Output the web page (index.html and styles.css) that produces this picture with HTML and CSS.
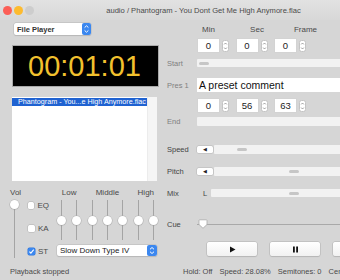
FILE: index.html
```
<!doctype html>
<html lang="en">
  <head>
    <meta charset="utf-8">
    <title>audio / Phantogram - You Dont Get Me High Anymore.flac</title>
    <link rel="stylesheet" href="styles.css">
  </head>
  <body>
    <div class="window">
      <div class="titlebar">
        <div class="lights">
          <span class="light red"></span>
          <span class="light yellow"></span>
          <span class="light gray"></span>
        </div>
        <div class="title">audio / Phantogram - You Dont Get Me High Anymore.flac</div>
      </div>

      <section class="main">
        <!-- left: player, timer, file list, mixer -->
        <div class="left">
          <div class="popup popup_small">
            <span>File Player</span>
            <svg class="popup__stepper" width="9" height="12" viewBox="0 0 9 12"><rect x="0" y="0" width="9" height="12" rx="2" fill="#3b87ef"/><path d="M2.6 4.6 L4.5 2.8 L6.4 4.6 M2.6 7.4 L4.5 9.2 L6.4 7.4" stroke="#fff" stroke-width="1" fill="none"/></svg>
          </div>
          <div class="timer">00:01:01</div>
          <div class="filelist">
            <div class="filelist__items">
              <div class="filelist__row selected">Phantogram - You...e High Anymore.flac</div>
            </div>
            <div class="filelist__gutter"></div>
          </div>

          <div class="mixer">
            <div class="vol">
              <div class="lbl">Vol</div>
              <div class="vslider vslider_vol"><span class="knob"></span></div>
            </div>
            <div class="checks">
              <label class="check"><span class="box"></span>EQ</label>
              <label class="check"><span class="box"></span>KA</label>
              <label class="check"><span class="box checked"><svg width="7" height="7" viewBox="0 0 7 7"><path d="M1.4 3.6 L2.9 5.1 L5.7 1.7" stroke="#fff" stroke-width="1.1" fill="none"/></svg></span>ST</label>
            </div>
            <div class="eq">
              <div class="eq__labels">
                <span class="eq_low">Low</span>
                <span class="eq_mid">Middle</span>
                <span class="eq_high">High</span>
              </div>
              <div class="eq__sliders" id="eq_sliders"></div>
              <div class="popup popup_wide">
                <span>Slow Down Type IV</span>
                <svg class="popup__stepper" width="10" height="11" viewBox="0 0 10 11"><rect x="0" y="0" width="10" height="11" rx="2" fill="#3b87ef"/><path d="M3 4.3 L5 2.5 L7 4.3 M3 6.7 L5 8.5 L7 6.7" stroke="#fff" stroke-width="1" fill="none"/></svg>
              </div>
            </div>
          </div>
          <div class="status status_left">Playback stopped</div>
        </div>

        <!-- right: positions, preset, transport -->
        <div class="right">
          <div class="row row_head">
            <span class="row__label"></span>
            <div class="col_head"><span>Min</span></div>
            <div class="col_head"><span>Sec</span></div>
            <div class="col_head"><span>Frame</span></div>
          </div>
          <div class="row row_nums" data-values="0,0,0"></div>
          <div class="row row_start">
            <span class="row__label dim">Start</span>
            <div class="track"><span class="pill pill_start"></span></div>
          </div>
          <div class="row row_pres">
            <span class="row__label dim">Pres 1</span>
            <div class="field">A preset comment</div>
          </div>
          <div class="row row_nums2" data-values="0,56,63"></div>
          <div class="row row_end">
            <span class="row__label dim">End</span>
            <div class="track"></div>
          </div>
          <div class="row row_speed">
            <span class="row__label">Speed</span>
            <div class="arrowbtn">&#9664;</div>
            <div class="track"><span class="pill" style="left: 23px"></span></div>
          </div>
          <div class="row row_pitch">
            <span class="row__label">Pitch</span>
            <div class="arrowbtn">&#9664;</div>
            <div class="track"><span class="pill" style="left: 75px"></span></div>
          </div>
          <div class="row row_mix">
            <span class="row__label">Mix</span>
            <span class="mix_l">L</span>
            <div class="track"><span class="pill" style="left: 78px"></span></div>
          </div>
          <div class="row row_cue">
            <span class="row__label">Cue</span>
            <div class="cue">
              <svg class="cue__knob" width="10" height="10" viewBox="0 0 10 10"><path d="M1 1.5 Q1 0.8 1.7 0.8 L8.3 0.8 Q9 0.8 9 1.5 L9 5.5 L5 9.3 L1 5.5 Z" fill="#fff" stroke="#a9a9a9" stroke-width="0.8"/></svg>
            </div>
          </div>
          <div class="row row_buttons">
            <button class="btn"><svg width="7" height="7" viewBox="0 0 7 7"><path d="M1 0.5 L6.5 3.5 L1 6.5 Z" fill="#111"/></svg></button>
            <button class="btn"><svg width="7" height="7" viewBox="0 0 7 7"><rect x="1" y="0.5" width="1.8" height="6" fill="#111"/><rect x="4.2" y="0.5" width="1.8" height="6" fill="#111"/></svg></button>
            <button class="btn"></button>
          </div>
          <div class="status status_right">
            <span>Hold: Off</span>
            <span>Speed: 28.08%</span>
            <span>Semitones: 0</span>
            <span>Cents: 0</span>
          </div>
        </div>
      </section>
    </div>

    <script type="text/javascript">
      // spin boxes (number + stepper)
      var stepperSvg = '<svg class="spin__stepper" width="7" height="12" viewBox="0 0 7 12"><rect x="0.5" y="0.5" width="6" height="11" rx="2" fill="#fff" stroke="#c4c4c4"/><path d="M2.2 4.4 L3.5 3 L4.8 4.4 M2.2 7.6 L3.5 9 L4.8 7.6" stroke="#888" stroke-width="0.8" fill="none"/></svg>';
      var numRows = document.querySelectorAll('.row_nums, .row_nums2');
      for (var r of numRows) {
        var values = r.getAttribute('data-values').split(',');
        for (var v of values) {
          var spin = document.createElement('div');
          spin.setAttribute('class', 'spin');
          spin.innerHTML = '<div class="spin__box">' + v + '</div>' + stepperSvg;
          r.appendChild(spin);
        }
      }

      // eq sliders
      var eq = document.getElementById('eq_sliders');
      for (var i = 0; i < 7; i++) {
        var s = document.createElement('div');
        s.setAttribute('class', 'vslider');
        s.innerHTML = '<span class="knob"></span>';
        eq.appendChild(s);
      }
    </script>
  </body>
</html>
```
FILE: styles.css
```
body{
  margin: 0;
  overflow: hidden;
  background: #d6d6d6;
  font-family: "Liberation Sans", Arial, sans-serif;
  font-size: 7.5px;
  color: #3a3a3a;
}
.window{
  width: 404px;
  height: 280px;
  background: #d6d6d6;
}
/*--------------------------*/
.titlebar{
  height: 20px;
  display: flex;
  align-items: center;
  background: linear-gradient(#e2e2e2, #d8d8d8);
}
.lights{
  display: flex;
  gap: 2px;
  padding-left: 3px;
  width: 40px;
}
.light{
  width: 9px;
  height: 9px;
  border-radius: 50%;
}
.red{ background: #fc5f57; }
.yellow{ background: #fdbb2f; }
.gray{ background: #cdcdcd; }
.title{
  flex: 1;
  text-align: center;
  margin-right: 40px;
  color: #4a4a4a;
  font-size: 7.6px;
}
/*--------------------------*/
.main{
  display: flex;
}
.left{
  width: 160px;
  flex: none;
}
.popup{
  display: flex;
  align-items: center;
  justify-content: space-between;
  background: #fff;
  border-radius: 2px;
  box-shadow: 0 0 0 0.5px #b9b9b9, 0 0.5px 1px rgba(0,0,0,0.15);
  color: #222;
}
.popup span{
  padding-left: 3px;
}
.popup_small{
  width: 77px;
  height: 12px;
  margin: 3px 0 0 14px;
  font-size: 7.5px;
  font-weight: bold;
  color: #333;
}
.popup_wide{
  width: 100px;
  height: 11px;
  margin-top: 5px;
  font-size: 8px;
}
.timer{
  margin: 10px 0 0 12px;
  width: 143px;
  height: 40px;
  border: 1px solid #a9a9a9;
  background: #000;
  color: #f2c12e;
  font-size: 29px;
  line-height: 40px;
  text-align: center;
  padding-right: 2px;
  box-sizing: content-box;
}
.filelist{
  display: flex;
  margin: 10px 0 0 12px;
  width: 145px;
  height: 84px;
  background: #fff;
}
.filelist__items{
  flex: 1;
  padding-top: 1px;
}
.filelist__gutter{
  width: 9px;
  background: #f5f5f5;
  border-left: 1px solid #ececec;
}
.filelist__row{
  height: 8px;
  line-height: 8px;
  padding-left: 6px;
  font-size: 7.2px;
}
.selected{
  background: #1f62d1;
  color: #fff;
}
/*--------------------------*/
.mixer{
  display: flex;
  align-items: flex-start;
  margin-top: 7px;
  padding-left: 10px;
}
.lbl,
.eq__labels span{
  height: 10px;
  line-height: 10px;
  font-size: 8px;
  color: #4a4a4a;
}
.vol{
  width: 11px;
  display: flex;
  flex-direction: column;
}
.vslider{
  position: relative;
  width: 9px;
  display: flex;
  justify-content: center;
}
.vslider::before{
  content: "";
  width: 1px;
  background: #a4a4a4;
}
.knob{
  position: absolute;
  left: 0;
  width: 9px;
  height: 9px;
  border-radius: 50%;
  background: #fff;
  box-shadow: 0 0 0 0.5px #b3b3b3, 0 0.5px 1px rgba(0,0,0,0.25);
}
.vslider_vol{
  margin: 2px 0 0 0;
  height: 58px;
}
.vslider_vol .knob{
  top: 0;
}
.checks{
  display: flex;
  flex-direction: column;
  gap: 16px;
  margin: 14px 0 0 7px;
  width: 21px;
}
.check{
  display: flex;
  align-items: center;
  gap: 3px;
  height: 7px;
  font-size: 8px;
  color: #4a4a4a;
}
.box{
  width: 7px;
  height: 7px;
  border-radius: 1.5px;
  background: #fff;
  box-shadow: 0 0 0 0.5px #b0b0b0;
  display: flex;
}
.box.checked{
  background: #3b87ef;
  box-shadow: 0 0 0 0.5px #2f74d8;
}
.eq{
  width: 101px;
  margin-left: 8px;
}
.eq__labels,
.eq__sliders{
  display: grid;
  grid-template-columns: repeat(7, 9px);
  justify-content: space-between;
}
.eq__labels span{
  text-align: center;
}
.eq_low{ grid-column: 1 / 3; }
.eq_mid{ grid-column: 3 / 6; }
.eq_high{ grid-column: 6 / 8; }
.eq__sliders{
  height: 40px;
  margin-top: 2px;
}
.eq__sliders .knob{
  top: 16px;
}
.status{
  font-size: 7.5px;
  color: #4a4a4a;
  height: 10px;
  line-height: 10px;
}
.status_left{
  margin: 9px 0 0 10px;
}
/*--------------------------*/
.right{
  flex: 1;
  padding-left: 7px;
}
.row{
  display: flex;
  align-items: center;
}
.row__label{
  width: 30px;
  flex: none;
  font-size: 7.5px;
  color: #444;
}
.dim{
  color: #808080;
}
.row_head{
  height: 10px;
  margin-top: 4px;
}
.col_head{
  width: 48.5px;
  flex: none;
}
.col_head span{
  display: flex;
  justify-content: center;
  width: 21px;
  margin-left: 1px;
  font-size: 8px;
  color: #4a4a4a;
}
.row_nums,
.row_nums2{
  height: 13px;
  padding-left: 31px;
  gap: 7.5px;
}
.row_nums{ margin-top: 5px; }
.row_nums2{ margin-top: 7px; }
.spin{
  display: flex;
  align-items: center;
  gap: 3px;
}
.spin__box{
  width: 21px;
  height: 13px;
  line-height: 13px;
  background: #fff;
  text-align: center;
  font-size: 9.5px;
  color: #222;
  box-shadow: 0 0 0 0.5px #cfcfcf;
}
.track{
  position: relative;
  flex: 1;
  height: 100%;
  background: #f2f2f2;
  border-radius: 1px;
}
.pill{
  position: absolute;
  top: 50%;
  width: 10px;
  height: 3px;
  margin-top: -1.5px;
  border-radius: 2px;
  background: #c6c6c6;
}
.pill_start{
  left: 2px;
}
.row_start{
  height: 8px;
  margin-top: 7px;
}
.row_pres{
  height: 14px;
  margin-top: 11px;
}
.field{
  flex: 1;
  height: 14px;
  line-height: 14px;
  background: #fff;
  padding-left: 2px;
  font-size: 10.5px;
  color: #111;
}
.row_end{
  height: 9px;
  margin-top: 5px;
}
.row_speed{
  height: 9px;
  margin-top: 19px;
}
.row_pitch{
  height: 9px;
  margin-top: 13px;
}
.arrowbtn{
  width: 16px;
  height: 7px;
  margin-right: 1px;
  background: #fff;
  border-radius: 1.5px;
  box-shadow: 0 0 0 0.5px #b5b5b5;
  font-size: 5px;
  line-height: 7px;
  text-align: center;
  color: #222;
}
.row_mix{
  height: 8px;
  margin-top: 13px;
}
.mix_l{
  width: 14px;
  padding-left: 6px;
  box-sizing: border-box;
  font-size: 7.5px;
  color: #444;
}
.row_cue{
  height: 10px;
  margin-top: 22px;
}
.cue{
  flex: 1;
  height: 10px;
  display: flex;
  align-items: center;
  background: linear-gradient(#a9a9a9, #a9a9a9) no-repeat 0 5px / 100% 1px;
}
.cue__knob{
  margin-left: 1px;
}
.row_buttons{
  height: 14px;
  margin-top: 13px;
  padding-left: 40px;
  gap: 13px;
}
.btn{
  flex: none;
  width: 50px;
  height: 14px;
  padding: 0;
  display: flex;
  align-items: center;
  justify-content: center;
  background: linear-gradient(#ffffff, #f1f1f1);
  border: none;
  border-radius: 2px;
  box-shadow: 0 0 0 0.5px #b2b2b2, 0 0.5px 1px rgba(0,0,0,0.12);
}
.status_right{
  display: flex;
  gap: 7px;
  margin: 11px 0 0 16px;
  white-space: nowrap;
}
```
